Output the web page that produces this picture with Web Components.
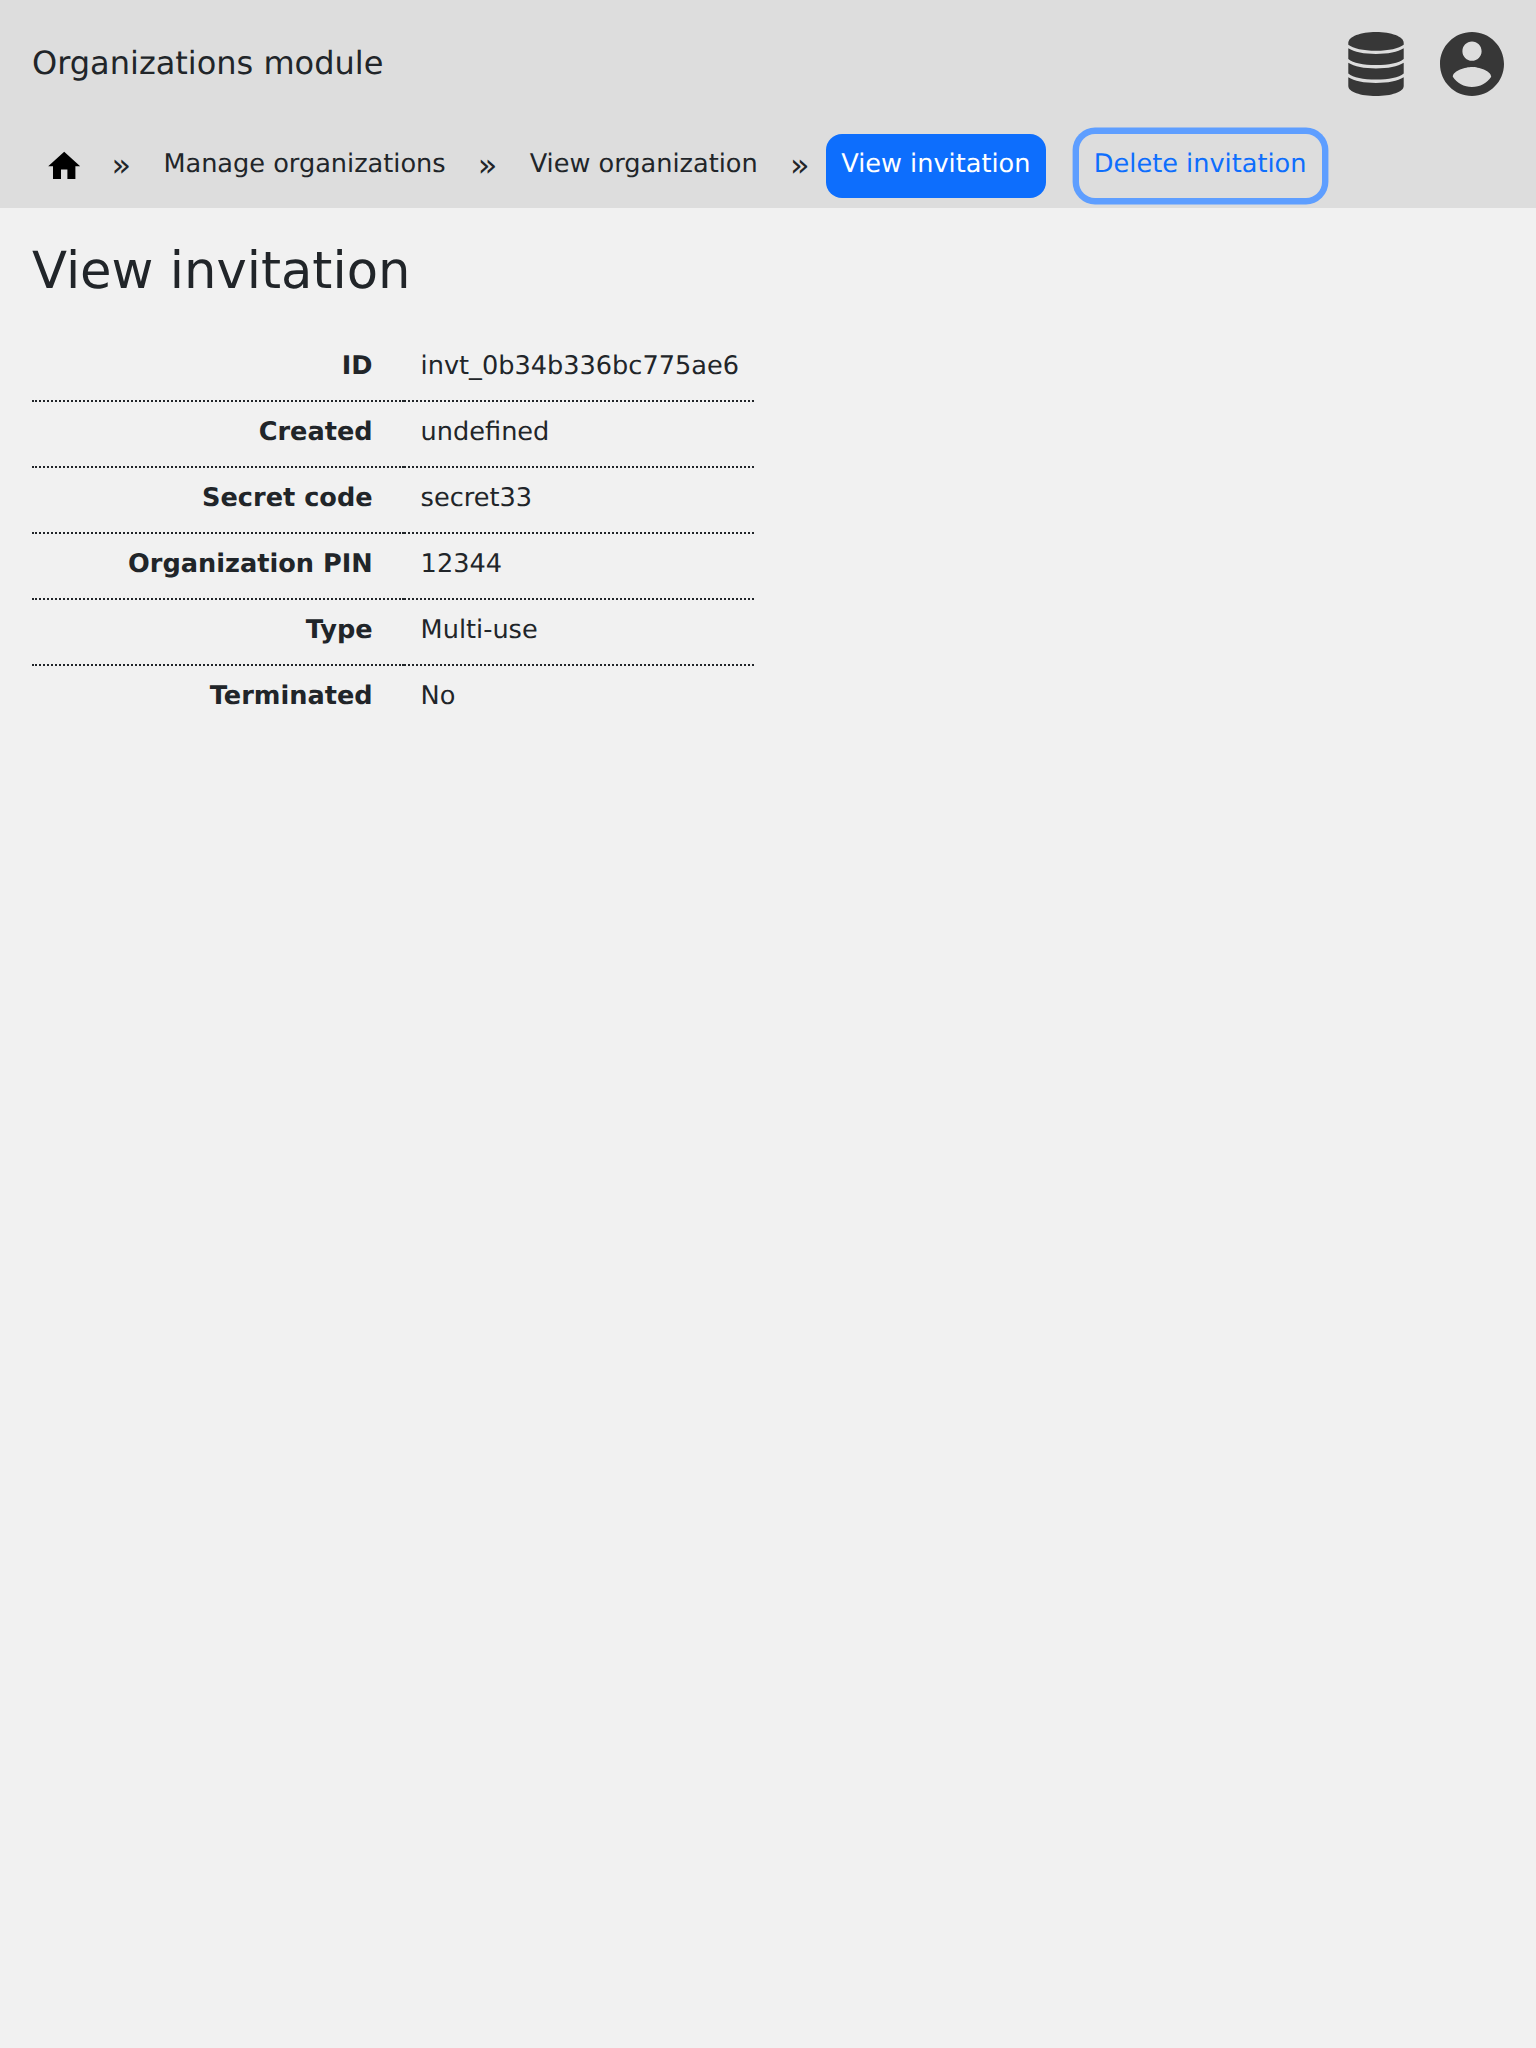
<!DOCTYPE html>
<html lang="en">
<head>
<meta charset="utf-8">
<title>Organizations module</title>
<style>
html,body{margin:0;min-height:100%;background:#f1f1f1}
body{font-family:"DejaVu Sans",sans-serif;font-size:25.6px;line-height:38.4px;color:#212529;text-rendering:geometricPrecision}
</style>
</head>
<body>
<app-page></app-page>
<script>
const define = (name, html) => customElements.define(name, class extends HTMLElement {
  constructor() {
    super();
    this.attachShadow({ mode: 'open' }).innerHTML = html;
  }
});

define('icon-database', `<style>:host{display:block;width:56px;height:64px;color:#373737}svg{display:block}</style>
<svg width="56" height="64" viewBox="-.3 0 56.600 64" preserveAspectRatio="none" fill="currentColor">
<path d="M0 11C0 4.6 12.5 0 28 0s28 4.6 28 11v1.8C51 16.600 41 18.800 28 18.800S5 16.600 0 12.800z"/>
<path d="M0 16.300C6 20.200 16 22 28 22s22-1.800 28-5.700V27c-5 4-15 6-28 6S5 31 0 27z"/>
<path d="M0 30.800C6 34.700 16 36.500 28 36.500s22-1.800 28-5.700v10.700c-5 4-15 6-28 6s-23-2-28-6z"/>
<path d="M0 45.300C6 49.200 16 51 28 51s22-1.800 28-5.700V54c0 6-12.500 10-28 10S0 60 0 54z"/>
</svg>`);

define('icon-account', `<style>:host{display:block;width:64px;height:64px;color:#373737}svg{display:block}</style>
<svg width="64" height="64" viewBox="2 2 20 20" fill="currentColor"><path d="M12 2C6.480 2 2 6.480 2 12s4.480 10 10 10 10-4.480 10-10S17.520 2 12 2zm0 3c1.660 0 3 1.340 3 3s-1.340 3-3 3-3-1.340-3-3 1.340-3 3-3zm0 14.200c-2.500 0-4.710-1.280-6-3.220.030-1.990 4-3.080 6-3.080 1.990 0 5.970 1.090 6 3.080-1.290 1.940-3.500 3.220-6 3.220z"/></svg>`);

define('icon-home', `<style>:host{display:block;color:#000}svg{display:block}</style>
<svg width="38.4" height="38.4" viewBox="0 0 24 24" fill="currentColor"><path d="M10 20v-6h4v6h5v-8h3L12 3 2 12h3v8z"/></svg>`);

define('app-header', `<style>
:host{display:flex;box-sizing:border-box;height:128px;padding:0 32px;align-items:center;justify-content:space-between}
.title{font-size:32px;line-height:48px;padding-bottom:3px}
.icons{display:flex;gap:36px}
</style><div class="title"><slot></slot></div><div class="icons"><icon-database></icon-database><icon-account></icon-account></div>`);

define('nav-crumb', `<style>:host{display:block;box-sizing:border-box;height:64px;padding:11px 16px 0;white-space:nowrap}</style><slot></slot>`);

define('nav-separator', `<style>:host{display:block;box-sizing:border-box;height:64px;padding-top:12px;width:52px;text-align:center;font-size:32px}</style>»`);

define('nav-button', `<style>
:host{display:block}
button{display:block;box-sizing:border-box;height:64px;margin:0;padding:11px 15.200px 14.600px;border:0;border-radius:16px;background:none;color:#0d6efd;font:inherit;text-rendering:inherit;white-space:nowrap}
:host([active]) button{background:#0d6efd;color:#fff}
:host([focused]) button{box-shadow:0 0 0 6.400px #5e9eff}
</style><button><slot></slot></button>`);

define('nav-trail', `<style>
:host{display:flex;box-sizing:border-box;height:80px;padding:6px 32px 0}
.home{padding:13px 12.200px 0 12.800px}
nav-button[active]{margin-left:.4px}
nav-button[focused]{margin-left:33px}
</style>
<div class="home"><icon-home></icon-home></div>
<nav-separator></nav-separator>
<nav-crumb>Manage organizations</nav-crumb>
<nav-separator></nav-separator>
<nav-crumb>View organization</nav-crumb>
<nav-separator></nav-separator>
<nav-button active>View invitation</nav-button>
<nav-button focused>Delete invitation</nav-button>`);

define('detail-table', `<style>
:host{display:block}
table{border-collapse:collapse;border-spacing:0}
th,td{box-sizing:border-box;vertical-align:top;white-space:nowrap;border-bottom:2px dotted #212529}
th{width:372px;text-align:right;font-weight:bold;padding:10.800px 31.400px 14.800px 0}
td{width:350px;padding:10.800px 0 14.800px 16.600px}
tr:last-child>*{border-bottom:0}
</style><table><tbody>
<tr><th>ID</th><td>invt_0b34b336bc775ae6</td></tr>
<tr><th>Created</th><td>undefined</td></tr>
<tr><th>Secret code</th><td>secret33</td></tr>
<tr><th>Organization PIN</th><td>12344</td></tr>
<tr><th>Type</th><td>Multi-use</td></tr>
<tr><th>Terminated</th><td>No</td></tr>
</tbody></table>`);

define('app-page', `<style>
:host{display:block}
header{background:#ddd;height:208px}
main{padding:32px 32px 0}
h1{margin:0 0 34px;font-size:51.200px;line-height:62px;font-weight:400}
</style>
<header><app-header>Organizations module</app-header><nav-trail></nav-trail></header>
<main><h1>View invitation</h1><detail-table></detail-table></main>`);
</script>
</body>
</html>
